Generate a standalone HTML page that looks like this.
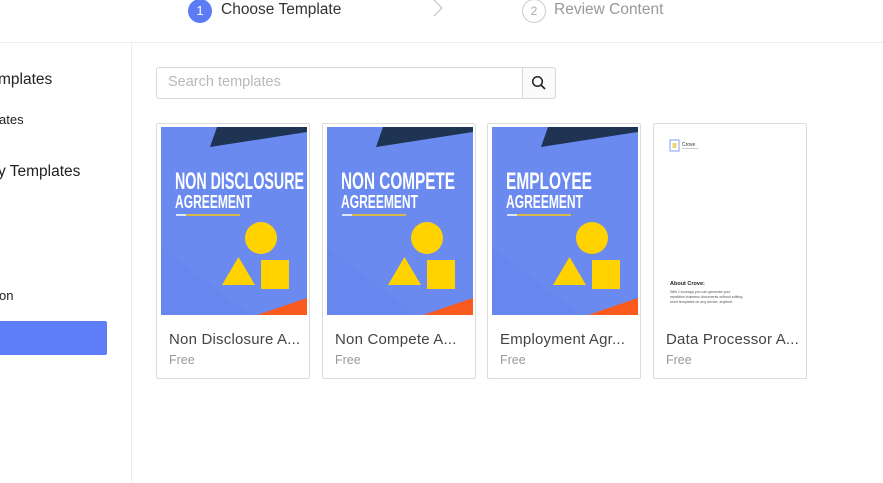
<!DOCTYPE html>
<html><head><meta charset="utf-8"><style>
*{box-sizing:border-box;margin:0;padding:0}
body{width:883px;height:483px;overflow:hidden;background:#fff;font-family:"Liberation Sans",sans-serif;position:relative;color:#333}
.abs{position:absolute}
.card{position:absolute;top:123px;width:154px;height:256px;border:1px solid #dcdcdc;border-radius:2px;background:#fff}
.card .img{position:absolute;left:4px;top:3px;width:146px;height:188px}
.card .t{position:absolute;left:12px;top:207px;font-size:15px;color:#444;white-space:nowrap;letter-spacing:0.2px}
.card .f{position:absolute;left:12px;top:229px;font-size:12.5px;color:#9a9a9a}
</style></head><body>
<!-- header -->
<div class="abs" style="left:188px;top:-1px;width:24px;height:24px;border-radius:50%;background:#5b7cf5;color:#fff;font-size:13px;text-align:center;line-height:24px">1</div>
<div class="abs" style="left:221px;top:1px;font-size:15.5px;color:#333">Choose Template</div>
<svg class="abs" style="left:430px;top:0" width="16" height="20"><path d="M4 0 L12 8 L4 16" fill="none" stroke="#bbb" stroke-width="1"/></svg>
<div class="abs" style="left:522px;top:-1px;width:24px;height:24px;border-radius:50%;border:1px solid #ccc;color:#aaa;font-size:12px;text-align:center;line-height:22px">2</div>
<div class="abs" style="left:554px;top:1px;font-size:15.5px;color:#999">Review Content</div>
<div class="abs" style="left:0;top:42px;width:883px;height:1px;background:#ececec"></div>
<div class="abs" style="left:131px;top:43px;width:1px;height:440px;background:#ececec"></div>
<!-- sidebar -->
<div class="abs" style="left:-2px;top:71px;font-size:15.5px;color:#222">mplates</div>
<div class="abs" style="left:-1px;top:112px;font-size:13px;color:#222">ates</div>
<div class="abs" style="left:-2px;top:163px;font-size:15.5px;color:#222">y Templates</div>
<div class="abs" style="left:-1px;top:288px;font-size:13px;color:#222">on</div>
<div class="abs" style="left:0;top:321px;width:107px;height:34px;background:#5e7ef7;border-radius:0 2px 2px 0"></div>
<!-- search -->
<div class="abs" style="left:156px;top:67px;width:400px;height:32px;border:1px solid #d8d8d8;border-radius:3px"></div>
<div class="abs" style="left:168px;top:74px;font-size:14.5px;color:#b8b8b8">Search templates</div>
<div class="abs" style="left:522px;top:67px;width:34px;height:32px;border:1px solid #d8d8d8;border-radius:0 3px 3px 0;background:#fafafa"></div>
<svg class="abs" style="left:531px;top:75px" width="16" height="16"><circle cx="6.5" cy="6.5" r="4.8" fill="none" stroke="#222" stroke-width="1.5"/><path d="M10 10 L14 14" stroke="#222" stroke-width="1.6"/></svg>

<!-- cards -->
<div class="card" style="left:156px">
<svg class="img" viewBox="0 0 146 188"><rect width="146" height="188" fill="#6a8af0"/><polygon points="0,188 0,120 90,188" fill="#6787ef"/><polygon points="56,0 146,0 146,5 49,20" fill="#1f3352"/>
<text x="14" y="62" font-family="Liberation Sans" font-weight="bold" font-size="24" fill="#fff" textLength="129" lengthAdjust="spacingAndGlyphs">NON DISCLOSURE</text>
<text x="14" y="81" font-family="Liberation Sans" font-weight="bold" font-size="18" fill="#fff" textLength="77" lengthAdjust="spacingAndGlyphs">AGREEMENT</text>
<rect x="15" y="87" width="10" height="2" fill="#dde4ff"/><rect x="25" y="87" width="54" height="2" fill="#d4b84a"/>
<circle cx="100" cy="111" r="16" fill="#ffd200"/><polygon points="61,158 94,158 77.5,130" fill="#ffd200"/><rect x="100" y="133" width="28" height="29" fill="#ffd200"/>
<polygon points="96,188 146,171 146,188" fill="#fb5a1e"/></svg>
<div class="t">Non Disclosure A...</div><div class="f">Free</div></div>

<div class="card" style="left:322px">
<svg class="img" viewBox="0 0 146 188"><rect width="146" height="188" fill="#6a8af0"/><polygon points="0,188 0,120 90,188" fill="#6787ef"/><polygon points="56,0 146,0 146,5 49,20" fill="#1f3352"/>
<text x="14" y="62" font-family="Liberation Sans" font-weight="bold" font-size="24" fill="#fff" textLength="114" lengthAdjust="spacingAndGlyphs">NON COMPETE</text>
<text x="14" y="81" font-family="Liberation Sans" font-weight="bold" font-size="18" fill="#fff" textLength="77" lengthAdjust="spacingAndGlyphs">AGREEMENT</text>
<rect x="15" y="87" width="10" height="2" fill="#dde4ff"/><rect x="25" y="87" width="54" height="2" fill="#d4b84a"/>
<circle cx="100" cy="111" r="16" fill="#ffd200"/><polygon points="61,158 94,158 77.5,130" fill="#ffd200"/><rect x="100" y="133" width="28" height="29" fill="#ffd200"/>
<polygon points="96,188 146,171 146,188" fill="#fb5a1e"/></svg>
<div class="t">Non Compete A...</div><div class="f">Free</div></div>

<div class="card" style="left:487px">
<svg class="img" viewBox="0 0 146 188"><rect width="146" height="188" fill="#6a8af0"/><polygon points="0,188 0,120 90,188" fill="#6787ef"/><polygon points="56,0 146,0 146,5 49,20" fill="#1f3352"/>
<text x="14" y="62" font-family="Liberation Sans" font-weight="bold" font-size="24" fill="#fff" textLength="86" lengthAdjust="spacingAndGlyphs">EMPLOYEE</text>
<text x="14" y="81" font-family="Liberation Sans" font-weight="bold" font-size="18" fill="#fff" textLength="77" lengthAdjust="spacingAndGlyphs">AGREEMENT</text>
<rect x="15" y="87" width="10" height="2" fill="#dde4ff"/><rect x="25" y="87" width="54" height="2" fill="#d4b84a"/>
<circle cx="100" cy="111" r="16" fill="#ffd200"/><polygon points="61,158 94,158 77.5,130" fill="#ffd200"/><rect x="100" y="133" width="28" height="29" fill="#ffd200"/>
<polygon points="96,188 146,171 146,188" fill="#fb5a1e"/></svg>
<div class="t">Employment Agr...</div><div class="f">Free</div></div>

<div class="card" style="left:653px">
<svg class="img" viewBox="0 0 146 188"><rect width="146" height="188" fill="#fff"/>
<rect x="12" y="13" width="9" height="11" fill="none" stroke="#7f9cf5" stroke-width="1"/><rect x="14.5" y="16" width="4" height="5" fill="#e8d76a"/>
<text x="24" y="19" font-family="Liberation Sans" font-size="5" fill="#333">Crove</text>
<rect x="24" y="21" width="16" height="1" fill="#ccc"/>
<text x="12" y="158" font-family="Liberation Sans" font-weight="bold" font-size="5.5" fill="#222">About Crove:</text>
<text x="12" y="166" font-family="Liberation Sans" font-size="3.6" fill="#555">With Croveapp you can generate your</text>
<text x="12" y="171" font-family="Liberation Sans" font-size="3.6" fill="#555">repetitive business documents without editing</text>
<text x="12" y="176" font-family="Liberation Sans" font-size="3.6" fill="#555">word templates on any device, anytime.</text></svg>
<div class="t">Data Processor A...</div><div class="f">Free</div></div>
</body></html>
